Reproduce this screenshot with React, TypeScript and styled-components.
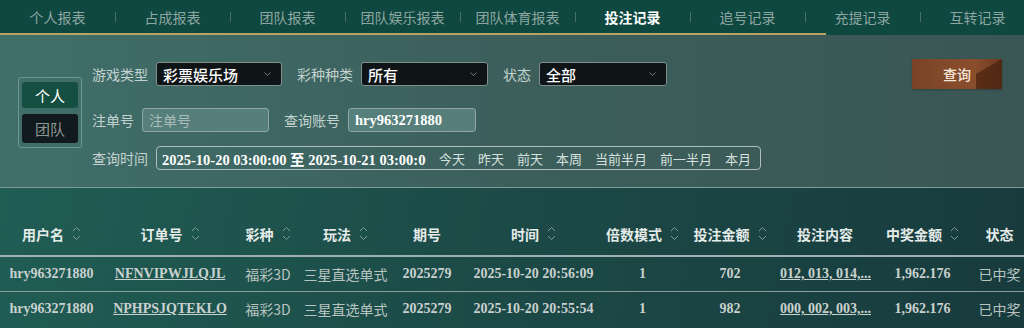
import React from 'react';
import styled, { createGlobalStyle } from 'styled-components';

const GlobalStyle = createGlobalStyle`
  html, body {
    margin: 0;
    padding: 0;
    width: 1024px;
    height: 328px;
    overflow: hidden;
    background: #1d4a47;
  }
  * {
    box-sizing: border-box;
  }
`;

const SANS = `"Noto Sans CJK SC", "Noto Sans", sans-serif`;
const SERIF = `"Liberation Serif", "Noto Sans CJK SC", serif`;

const Page = styled.div`
  width: 1024px;
  height: 328px;
  display: flex;
  flex-direction: column;
  font-family: ${SANS};
`;

const Nav = styled.nav`
  background: #0f4840;
  height: 35px;
  display: flex;
  flex-direction: column;
`;

const TabRow = styled.div`
  display: flex;
  height: 33px;
`;

const Tab = styled.div<{ $active?: boolean; $first?: boolean }>`
  position: relative;
  width: 115px;
  flex: none;
  display: flex;
  align-items: center;
  justify-content: center;
  font-size: 14px;
  font-weight: ${(p) => (p.$active ? 700 : 400)};
  color: ${(p) => (p.$active ? '#ffffff' : '#8ea6a0')};

  &::before {
    content: '';
    display: ${(p) => (p.$first ? 'none' : 'block')};
    position: absolute;
    left: 0;
    top: 12px;
    width: 1px;
    height: 10px;
    background: #4a6f68;
  }
`;

const GoldRule = styled.div`
  width: 826px;
  height: 2px;
  background: #b8a461;
`;

const Panel = styled.section`
  height: 153px;
  display: flex;
  align-items: flex-start;
  padding: 27px 22px 0 18px;
  background: linear-gradient(90deg, #406f6a 0%, #3c5f5c 50%, #3a5654 100%);
  border-bottom: 1px solid #7f9d98;
`;

const Toggle = styled.div`
  margin-top: 15px;
  width: 64px;
  padding: 4px 3px;
  border: 1px solid #6e9892;
  border-radius: 3px;
  display: flex;
  flex-direction: column;
  gap: 6px;
`;

const ToggleButton = styled.div<{ $active?: boolean }>`
  height: ${(p) => (p.$active ? 26 : 29)}px;
  border-radius: 3px;
  display: flex;
  align-items: center;
  justify-content: center;
  font-size: 15px;
  background: ${(p) => (p.$active ? '#154f42' : '#111a1c')};
  color: ${(p) => (p.$active ? '#ffffff' : '#8c9996')};
`;

const Form = styled.div`
  margin-left: 10px;
  display: flex;
  flex-direction: column;
`;

const FormRow = styled.div<{ $top?: number }>`
  display: flex;
  align-items: center;
  height: 24px;
  margin-top: ${(p) => p.$top ?? 0}px;
`;

const Label = styled.span<{ $lead?: boolean }>`
  font-size: 14px;
  color: #c3d2cf;
  margin-left: ${(p) => (p.$lead ? 0 : 15)}px;
  margin-right: 8px;
  white-space: nowrap;
`;

const Select = styled.div<{ $w: number }>`
  width: ${(p) => p.$w}px;
  height: 24px;
  background: #0f1517;
  border: 1px solid #7f8f8c;
  border-radius: 3px;
  display: flex;
  align-items: center;
  justify-content: space-between;
  padding: 0 9px 0 6px;
  font-size: 15px;
  font-weight: 500;
  color: #ffffff;
`;

const TextInput = styled.div<{ $w: number; $filled?: boolean }>`
  width: ${(p) => p.$w}px;
  height: 24px;
  background: #567f7b;
  border: 1px solid #8fa8a4;
  border-radius: 3px;
  display: flex;
  align-items: center;
  padding: 0 6px;
  font-family: ${(p) => (p.$filled ? SERIF : SANS)};
  font-weight: ${(p) => (p.$filled ? 700 : 400)};
  font-size: ${(p) => (p.$filled ? 14.5 : 14)}px;
  color: ${(p) => (p.$filled ? '#ffffff' : '#a9bdb9')};
`;

const DateBox = styled.div`
  width: 605px;
  height: 24px;
  border: 1px solid #aebfbc;
  border-radius: 4px;
  display: flex;
  align-items: center;
  padding-left: 5px;
`;

const DateText = styled.div`
  width: 264px;
  overflow: hidden;
  white-space: nowrap;
  font-family: ${SERIF};
  font-weight: 700;
  font-size: 14.5px;
  color: #ffffff;
`;

const DateSep = styled.span`
  font-family: ${SANS};
  font-weight: 700;
`;

const QuickButtons = styled.div`
  display: flex;
  gap: 13px;
  margin-left: 13px;
`;

const Quick = styled.span`
  font-size: 13px;
  color: #d6e0de;
  white-space: nowrap;
`;

const QueryButton = styled.button`
  position: relative;
  margin-left: auto;
  margin-top: -3px;
  width: 90px;
  height: 30px;
  border: none;
  border-radius: 1px;
  overflow: hidden;
  background: linear-gradient(90deg, #7a4327 0%, #8a4e2d 70%, #6b3a20 100%);
  color: #f4e6da;
  font-family: ${SANS};
  font-size: 14px;
  font-weight: 500;
  padding: 0;
  box-shadow: 0 1px 2px rgba(0, 0, 0, 0.25);

  &::after {
    content: '';
    position: absolute;
    right: 0;
    top: 0;
    width: 0;
    height: 0;
    border-top: 15px solid transparent;
    border-bottom: 15px solid #4a230f;
    border-right: 26px solid #4a230f;
    opacity: 0.75;
  }

  span {
    position: relative;
    z-index: 1;
  }
`;

const TableArea = styled.section`
  flex: 1;
  padding-top: 24px;
  background: linear-gradient(100deg, #205d55 0%, #1c4b48 45%, #183b3d 100%);
`;

const Table = styled.table`
  width: 1024px;
  border-collapse: collapse;
  table-layout: fixed;
`;

const Th = styled.th`
  height: 44px;
  padding: 0;
  font-size: 14px;
  font-weight: 700;
  color: #e4ebe9;
  text-align: center;
  white-space: nowrap;
  border-bottom: 2px solid #9fb1ae;
`;

const HeadInner = styled.span`
  display: inline-flex;
  align-items: center;
  gap: 8px;
`;

const Td = styled.td<{ $serif?: boolean; $link?: boolean }>`
  height: 35px;
  padding: 0;
  text-align: center;
  white-space: nowrap;
  font-family: ${(p) => (p.$serif ? SERIF : SANS)};
  font-weight: ${(p) => (p.$serif ? 700 : 400)};
  font-size: 14px;
  color: ${(p) => (p.$serif ? '#c9d1ce' : '#b9c4c1')};
  text-decoration: ${(p) => (p.$link ? 'underline' : 'none')};
`;

const Tr = styled.tr`
  & + & td {
    border-top: 1px solid #8a9d9a;
  }
`;

const Chevron = () => (
  <svg width="9" height="6" viewBox="0 0 9 6">
    <path d="M1.5 1.5 L4.5 4.5 L7.5 1.5" fill="none" stroke="#6f7e7b" strokeWidth="1" />
  </svg>
);

const SortIcon = () => (
  <svg width="9" height="15" viewBox="0 0 9 15">
    <path d="M1 5 L4.5 1.5 L8 5" fill="none" stroke="#7f9b96" strokeWidth="1" />
    <path d="M1 10 L4.5 13.5 L8 10" fill="none" stroke="#7f9b96" strokeWidth="1" />
  </svg>
);

const TABS = ['个人报表', '占成报表', '团队报表', '团队娱乐报表', '团队体育报表', '投注记录', '追号记录', '充提记录', '互转记录'];

const COLUMNS: { title: string; width: number; sort?: boolean }[] = [
  { title: '用户名', width: 103, sort: true },
  { title: '订单号', width: 134, sort: true },
  { title: '彩种', width: 62, sort: true },
  { title: '玩法', width: 93, sort: true },
  { title: '期号', width: 70 },
  { title: '时间', width: 143, sort: true },
  { title: '倍数模式', width: 75, sort: true },
  { title: '投注金额', width: 100, sort: true },
  { title: '投注内容', width: 90 },
  { title: '中奖金额', width: 105, sort: true },
  { title: '状态', width: 49 },
];

const ROWS = [
  {
    user: 'hry963271880',
    order: 'NFNVIPWJLQJL',
    lottery: '福彩3D',
    play: '三星直选单式',
    issue: '2025279',
    time: '2025-10-20 20:56:09',
    multiple: '1',
    amount: '702',
    content: '012, 013, 014,...',
    prize: '1,962.176',
    status: '已中奖',
  },
  {
    user: 'hry963271880',
    order: 'NPHPSJQTEKLO',
    lottery: '福彩3D',
    play: '三星直选单式',
    issue: '2025279',
    time: '2025-10-20 20:55:54',
    multiple: '1',
    amount: '982',
    content: '000, 002, 003,...',
    prize: '1,962.176',
    status: '已中奖',
  },
];

const QUICK = ['今天', '昨天', '前天', '本周', '当前半月', '前一半月', '本月'];

export default function App() {
  return (
    <Page>
      <GlobalStyle />
      <Nav>
        <TabRow>
          {TABS.map((t, i) => (
            <Tab key={t} $first={i === 0} $active={t === '投注记录'}>
              {t}
            </Tab>
          ))}
        </TabRow>
        <GoldRule />
      </Nav>

      <Panel>
        <Toggle>
          <ToggleButton $active>个人</ToggleButton>
          <ToggleButton>团队</ToggleButton>
        </Toggle>
        <Form>
          <FormRow>
            <Label $lead>游戏类型</Label>
            <Select $w={126}>
              彩票娱乐场
              <Chevron />
            </Select>
            <Label>彩种种类</Label>
            <Select $w={127}>
              所有
              <Chevron />
            </Select>
            <Label>状态</Label>
            <Select $w={128}>
              全部
              <Chevron />
            </Select>
          </FormRow>
          <FormRow $top={22}>
            <Label $lead>注单号</Label>
            <TextInput $w={127}>注单号</TextInput>
            <Label>查询账号</Label>
            <TextInput $w={128} $filled>
              hry963271880
            </TextInput>
          </FormRow>
          <FormRow $top={14}>
            <Label $lead>查询时间</Label>
            <DateBox>
              <DateText>
                2025-10-20 03:00:00 <DateSep>至</DateSep> 2025-10-21 03:00:00
              </DateText>
              <QuickButtons>
                {QUICK.map((q) => (
                  <Quick key={q}>{q}</Quick>
                ))}
              </QuickButtons>
            </DateBox>
          </FormRow>
        </Form>
        <QueryButton>
          <span>查询</span>
        </QueryButton>
      </Panel>

      <TableArea>
        <Table>
          <colgroup>
            {COLUMNS.map((c) => (
              <col key={c.title} style={{ width: c.width }} />
            ))}
          </colgroup>
          <thead>
            <tr>
              {COLUMNS.map((c) => (
                <Th key={c.title}>
                  <HeadInner>
                    {c.title}
                    {c.sort && <SortIcon />}
                  </HeadInner>
                </Th>
              ))}
            </tr>
          </thead>
          <tbody>
            {ROWS.map((r) => (
              <Tr key={r.order}>
                <Td $serif>{r.user}</Td>
                <Td $serif $link>
                  {r.order}
                </Td>
                <Td>{r.lottery}</Td>
                <Td>{r.play}</Td>
                <Td $serif>{r.issue}</Td>
                <Td $serif>{r.time}</Td>
                <Td $serif>{r.multiple}</Td>
                <Td $serif>{r.amount}</Td>
                <Td $serif $link>
                  {r.content}
                </Td>
                <Td $serif>{r.prize}</Td>
                <Td>{r.status}</Td>
              </Tr>
            ))}
          </tbody>
        </Table>
      </TableArea>
    </Page>
  );
}
